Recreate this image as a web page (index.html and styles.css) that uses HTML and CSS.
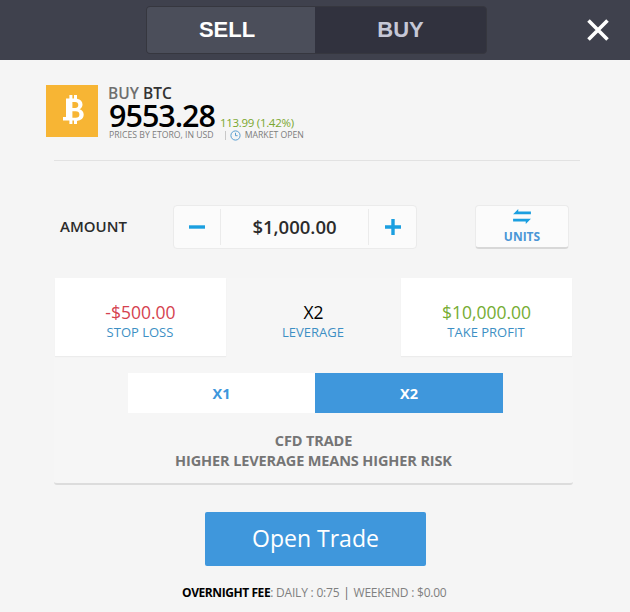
FILE: index.html
```html
<!DOCTYPE html>
<html lang="en">
<head>
<meta charset="utf-8">
<title>Open Trade</title>
<link rel="stylesheet" href="styles.css">
</head>
<body>
<div class="page">
  <header class="topbar">
    <div class="tabs">
      <div class="tab tab-active">SELL</div>
      <div class="tab">BUY</div>
    </div>
    <svg class="close" width="24" height="24" viewBox="0 0 24 24"><path d="M2.500 2.500 21.500 21.500M21.500 2.500 2.500 21.500" stroke="#fff" stroke-width="3.600" fill="none"/></svg>
  </header>

  <section class="instrument">
    <div class="coin">
      <svg width="52" height="52" viewBox="0 0 52 52"><path fill="#fff" fill-rule="evenodd" d="M20 13.500h3.400V10h3v3.500h1.600V10h3v3.800c3.600.7 5.500 2.700 5.500 5.700 0 2.200-1.100 3.800-3 4.700 2.700.8 4.200 2.700 4.200 5.400 0 3.600-2.500 6-6.700 6.300V39h-3v-3.600h-1.600V39h-3v-3.600H17V32h3zm6.400 3.600v6h2.800c2 0 3.100-1.100 3.100-3s-1.100-3-3.100-3zm0 9.200v6.500h3.400c2.300 0 3.600-1.200 3.600-3.300s-1.300-3.200-3.600-3.200z"/></svg>
    </div>
    <div class="quote">
      <div class="quote-title"><span class="muted">BUY</span> BTC</div>
      <div class="quote-line">
        <span class="price">9553.28</span>
        <span class="change">113.99 (1.42%)</span>
      </div>
      <div class="quote-meta">
        <span>PRICES BY ETORO, IN USD</span>
        <span class="sep"></span>
        <svg class="clock" width="11" height="11" viewBox="0 0 11 11"><circle cx="5.500" cy="5.500" r="4.600" fill="none" stroke="#5a9fd0" stroke-width="1"/><path d="M5.500 2.800v2.900h2.100" fill="none" stroke="#5a9fd0" stroke-width="1"/></svg>
        <span>MARKET OPEN</span>
      </div>
    </div>
  </section>

  <section class="amount-row">
    <div class="amount-label">AMOUNT</div>
    <div class="stepper">
      <div class="step">
        <svg width="16" height="16" viewBox="0 0 16 16"><path d="M0 6.300h16v3.400H0z" fill="#1b9fe0"/></svg>
      </div>
      <div class="amount-value">$1,000.00</div>
      <div class="step step-plus">
        <svg width="18" height="18" viewBox="0 0 18 18"><path d="M7.300 1h3.400v6.300H17v3.400h-6.300V17H7.300v-6.300H1V7.300h6.300z" fill="#1b9fe0"/></svg>
      </div>
    </div>
    <div class="units">
      <svg width="18" height="15" viewBox="0 0 19 16"><path d="M5.500 0v2.600H19v3H0zM13.500 16v-2.600H0v-3h19z" fill="#1b9fe0"/></svg>
      <span>UNITS</span>
    </div>
  </section>

  <section class="panel">
    <div class="stats">
      <div class="stat stat-card">
        <div class="stat-value red">-$500.00</div>
        <div class="stat-label">STOP LOSS</div>
      </div>
      <div class="stat">
        <div class="stat-value">X2</div>
        <div class="stat-label">LEVERAGE</div>
      </div>
      <div class="stat stat-card">
        <div class="stat-value green">$10,000.00</div>
        <div class="stat-label">TAKE PROFIT</div>
      </div>
    </div>
    <div class="leverage">
      <div class="lev">X1</div>
      <div class="lev lev-on">X2</div>
    </div>
    <p class="risk">CFD TRADE<br>HIGHER LEVERAGE MEANS HIGHER RISK</p>
  </section>

  <div class="cta-wrap"><button class="cta">Open Trade</button></div>

  <p class="fee"><b>OVERNIGHT FEE</b>: DAILY : 0:75 <span class="pipe">|</span> WEEKEND : $0.00</p>
</div>
</body>
</html>
```
FILE: styles.css
```css
* { box-sizing: border-box; }
html, body { margin: 0; padding: 0; }
body {
  width: 630px;
  height: 612px;
  overflow: hidden;
  background: #f5f5f5;
  font-family: "Open Sans", "Liberation Sans", sans-serif;
}
.page { width: 630px; height: 612px; }

.topbar {
  height: 60px;
  background: #3f414d;
  padding: 6px 20px 0 146px;
  display: flex;
  justify-content: space-between;
  align-items: flex-start;
}
.tabs {
  width: 341px;
  height: 48px;
  background: #31323e;
  border: 1px solid #36373f;
  border-radius: 4px;
  display: flex;
  overflow: hidden;
}
.tab {
  flex: 1;
  display: flex;
  align-items: center;
  justify-content: center;
  font: 700 22px "Liberation Sans", Arial, sans-serif;
  color: #c5c7d6;
}
.tab-active {
  flex: 0 0 168px;
  padding-right: 8px;
  background: #4b4e5a;
  color: #fff;
}
.close { margin-top: 12px; }

.instrument {
  margin: 0 50px 0 54px;
  height: 101px;
  border-bottom: 1px solid #e2e2e2;
  padding-top: 25px;
  display: flex;
}
.coin {
  width: 52px;
  height: 52px;
  margin-left: -8px;
  background: #f7b534;
  flex: none;
}
.quote { margin-left: 11px; }
.quote-title {
  font-size: 15.500px;
  line-height: 16px;
  font-weight: 600;
  color: #333;
  margin-left: -1px;
}
.muted { color: #6f6f6f; }
.quote-line {
  display: flex;
  align-items: flex-end;
  height: 27px;
  margin-top: 1px;
}
.price {
  font-size: 30.500px;
  line-height: 27px;
  font-weight: 600;
  letter-spacing: -1px;
  color: #000;
}
.change {
  font-size: 11.500px;
  line-height: 13px;
  letter-spacing: -0.300px;
  color: #7aa72f;
  margin-left: 5px;
}
.quote-meta {
  display: flex;
  align-items: center;
  font-size: 8.700px;
  line-height: 12px;
  color: #7d7d7d;
  white-space: nowrap;
}
.sep { width: 1px; height: 9px; background: #c8c8c8; margin: 0 4px 0 11px; }
.clock { margin-right: 4px; }

.amount-row {
  height: 44px;
  margin: 44px 0 0 60px;
  display: flex;
  align-items: center;
}
.amount-label {
  width: 113px;
  margin-top: -3px;
  font-size: 15px;
  font-weight: 600;
  color: #2b2b2b;
}
.stepper {
  width: 244px;
  height: 44px;
  background: #fbfbfb;
  border: 1px solid #ebebeb;
  border-radius: 4px;
  display: flex;
  align-items: center;
}
.step {
  width: 46px;
  height: 36px;
  flex: none;
  display: flex;
  align-items: center;
  justify-content: center;
}
.step-plus { width: 47px; }
.amount-value {
  flex: 1;
  height: 36px;
  border-left: 1px solid #ebebeb;
  border-right: 1px solid #ebebeb;
  text-align: center;
  font-size: 18.500px;
  font-weight: 600;
  color: #2b2b2b;
  line-height: 36px;
}
.units {
  width: 94px;
  height: 44px;
  margin-left: 58px;
  background: #fbfbfb;
  border: 1px solid #ebebeb;
  border-bottom: 2px solid #d8d8d8;
  border-radius: 4px;
  display: flex;
  flex-direction: column;
  align-items: center;
  padding-top: 3px;
  font-size: 12px;
  font-weight: 700;
  line-height: 16px;
  color: #4a96d6;
}
.units svg { margin-bottom: 5px; }

.panel {
  width: 519px;
  height: 207px;
  margin: 29px 0 0 54px;
  background: #f6f6f6;
  border-bottom: 2px solid #dcdcdc;
  border-radius: 0 0 3px 3px;
  padding: 0 1px;
}
.stats { display: flex; height: 78px; }
.stat {
  flex: 1;
  text-align: center;
  padding-top: 24px;
}
.stat-card {
  flex: 0 0 171px;
  background: #fff;
  box-shadow: 0 1px 1px #ececec;
}
.stat-value { font-size: 17.500px; line-height: 20px; color: #000; }
.red { color: #d5424f; }
.green { color: #76ac32; }
.stat-label {
  font-size: 13px;
  line-height: 20px;
  color: #3d8fc4;
  margin-left: -1px;
}
.leverage {
  display: flex;
  width: 375px;
  height: 40px;
  margin: 17px 0 0 73px;
}
.lev {
  flex: 0 0 187px;
  background: #fff;
  display: flex;
  align-items: center;
  justify-content: center;
  font-size: 14.500px;
  font-weight: 700;
  color: #3d97dc;
}
.lev-on { flex: 1; background: #3f97dc; color: #fff; }
.risk {
  margin: 18px 0 0;
  text-align: center;
  font-size: 14.500px;
  font-weight: 700;
  letter-spacing: -0.130px;
  line-height: 20px;
  color: #757575;
}

.cta-wrap { display: flex; margin: 27px 0 0 205px; }
.cta {
  width: 221px;
  height: 54px;
  background: #3f97dc;
  border: 0;
  border-radius: 2px;
  padding: 0 0 2px;
  font-family: "Open Sans", sans-serif;
  font-size: 23px;
  color: #fff;
}

.fee {
  margin: 19px 0 0 182px;
  font-size: 12px;
  line-height: 16px;
  letter-spacing: -0.210px;
  color: #808080;
  white-space: nowrap;
}
.fee b { color: #000; font-weight: 700; letter-spacing: -0.420px; }
.pipe { color: #666; margin: 0 1px; }
```
